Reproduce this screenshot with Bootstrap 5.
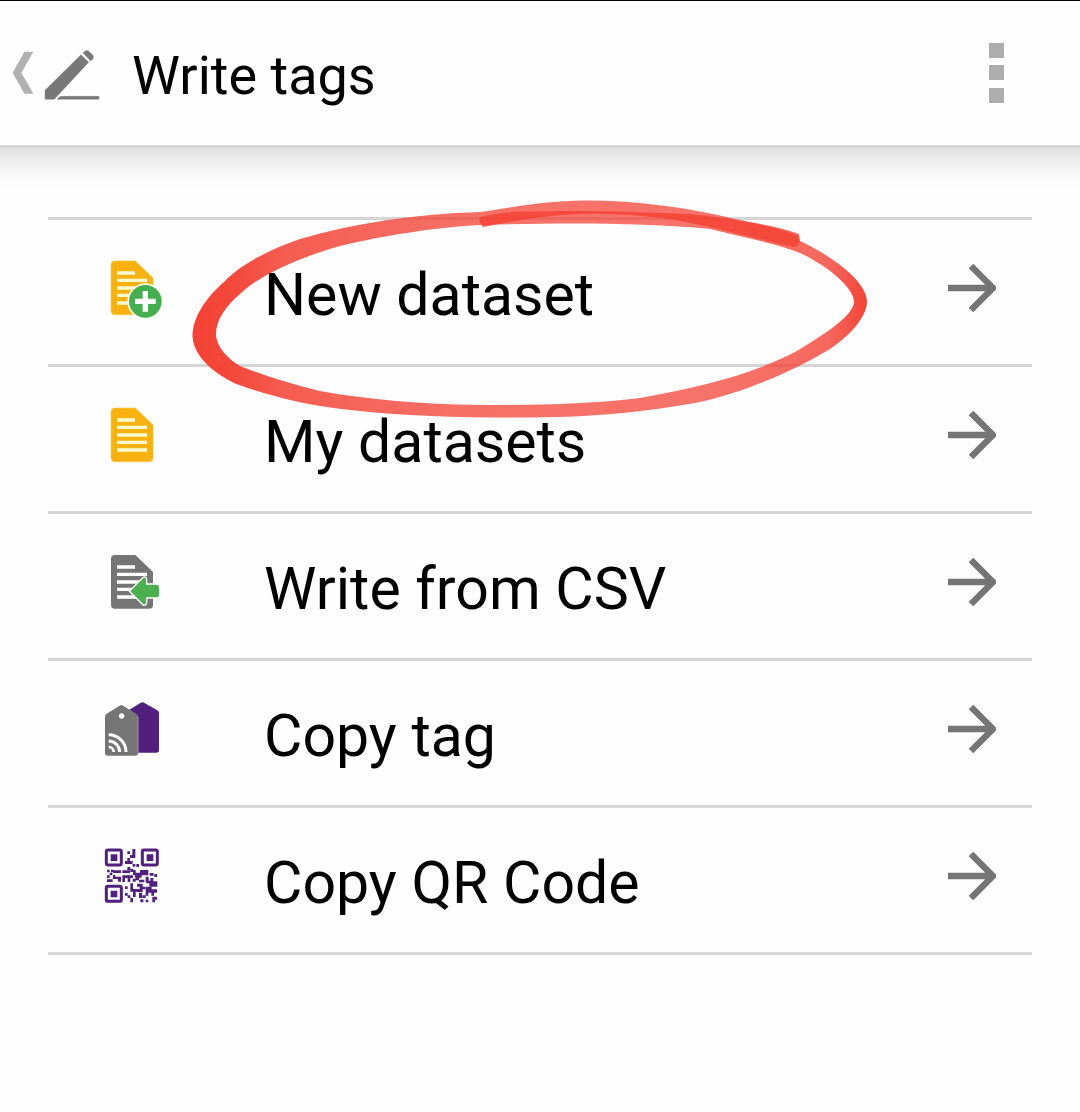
<!DOCTYPE html>
<html lang="en">
<head>
<meta charset="utf-8">
<meta name="viewport" content="width=device-width, initial-scale=1">
<title>Write tags</title>
<link href="https://cdn.jsdelivr.net/npm/bootstrap@5.3.0/dist/css/bootstrap.min.css" rel="stylesheet">
<style>
body { font-family: Roboto, "Noto Sans", sans-serif; background: #fefefe; color: #000; }
svg { display: block; flex: none; }
.app-bar { border-top: 1px solid #000; border-bottom: 3px solid #d5d5d5; height: 148px; padding-right: 76px; }
.app-title { font-size: 54px; line-height: 64px; font-weight: 400; margin-left: 22px; padding-top: 6px; }
.bar-shade { height: 69px; background: linear-gradient(#e0e0e0 0, #efefef 14px, #fafafa 28px, #fefefe 40px); }
.menu-list { margin: 0 48px; border-top: 3px solid #d5d5d5; }
.menu-list > li { border-bottom: 3px solid #d5d5d5; }
.menu-row { height: 144px; padding: 0 36px 4px 47px; color: #000; }
.menu-text { font-size: 59px; line-height: 70px; padding-top: 10px; margin-left: 89px; }
.pen-mark { left: 136px; top: -28px; pointer-events: none; z-index: 2; }
</style>
</head>
<body>
<svg width="0" height="0" class="position-absolute" aria-hidden="true">
  <defs>
    <path id="sheet" d="M60 33H121L174 84V183Q174 194 163 194H60Q48 194 48 183V44Q48 33 60 33Z"/>
    <path id="sheet-lines" d="M66 69H120M66 91H156M66 114H156M66 136H156M66 159H156" stroke-width="10" fill="none"/>
    <path id="arrow" d="M0 24H43M23 2L45 24L23 46" fill="none" stroke="#757575" stroke-width="6.500"/>
  </defs>
</svg>

<header class="app-bar d-flex align-items-center">
  <a href="#" aria-label="Back">
    <svg width="110" height="60" viewBox="0 130 330 180">
      <path d="M73 156H100L64 219L100 282H73L38 219Z" fill="#b1b1b1"/>
      <path d="M135 272L243 165L266 188L163 299H135ZM249 160L256 154Q262 150 268 156L278 166Q283 172 278 179L272 184ZM181 290H297V299H171Z" fill="#787878" stroke="#787878"/>
    </svg>
  </a>
  <h1 class="app-title mb-0">Write tags</h1>
  <button type="button" class="btn p-0 border-0 ms-auto" aria-label="More options">
    <svg width="15" height="60" viewBox="0 0 15 60" fill="#adadad"><path d="M0 0h15v15H0zM0 22h15v15H0zM0 45h15v15H0z"/></svg>
  </button>
</header>
<div class="bar-shade"></div>

<main>
  <ul class="menu-list list-unstyled">
    <li class="position-relative">
      <a href="#" class="menu-row d-flex align-items-center text-decoration-none">
        <svg width="80" height="80" viewBox="0 0 240 240">
          <use href="#sheet" fill="#f7b20f" stroke="#f9c54a" stroke-width="2"/>
          <use href="#sheet-lines" stroke="#fffad0"/>
          <circle cx="151" cy="154" r="54" fill="#fffff0"/>
          <circle cx="151" cy="154" r="49" fill="#45ae50"/>
          <path d="M151 123V185M120 154H182" stroke="#fff" stroke-width="16"/>
        </svg>
        <span class="menu-text">New dataset</span>
        <svg class="ms-auto" width="48" height="52" viewBox="0 0 48 52"><use href="#arrow"/></svg>
      </a>
      <svg class="pen-mark position-absolute" width="700" height="240" viewBox="184 192 700 240" aria-hidden="true">
        <defs>
          <linearGradient id="ink" gradientUnits="userSpaceOnUse" x1="192" y1="0" x2="868" y2="0">
            <stop offset="0" stop-color="#f44336"/>
            <stop offset=".06" stop-color="#f44336" stop-opacity=".97"/>
            <stop offset=".14" stop-color="#f44336" stop-opacity=".86"/>
            <stop offset=".4" stop-color="#f44336" stop-opacity=".76"/>
            <stop offset=".75" stop-color="#f44336" stop-opacity=".74"/>
            <stop offset=".94" stop-color="#f44336" stop-opacity=".8"/>
            <stop offset="1" stop-color="#f44336"/>
          </linearGradient>
        </defs>
        <path fill="url(#ink)" fill-rule="evenodd" d="M799 234C780 227 760 224 735 219C690 208 640 200.500 585 200.500C545 201 520 206 480 212C415 214 355 223 300 239C270 249 240 265 225 281C203 300 192.500 320 192.500 336C193 352 207 370 236 384C262 393 300 405 350 410C410 417 480 418 530 417.500C600 417 650 411 700 402C755 389 800 367 830 349C848 337 867 318 867 301C866 283 838 259 800 241ZM480 225C550 223 640 222 710 229C745 238 775 243 800 253C828 266 854 288 854 302C853 316 825 334 795 352C750 375 700 387 640 398C590 404 540 405 480 405C420 404 370 400 320 391C290 384 260 374 240 366C222 355 216 342 216 334C216 320 226 306 240 294C258 276 300 257 340 246C385 235 440 227 480 225Z"/>
        <path fill="#f44336" fill-opacity=".85" d="M480 217Q505 211 530 211.500C590 210 640 212 690 214C730 218 770 225 794 234Q801 237 799 243Q797 249 790 246C760 240 730 231 700 225C660 216 620 213 580 214C545 215 515 221 483 227Q478 222 480 217Z"/>
      </svg>
    </li>
    <li>
      <a href="#" class="menu-row d-flex align-items-center text-decoration-none">
        <svg width="80" height="80" viewBox="0 0 240 240">
          <use href="#sheet" fill="#f7b20f" stroke="#f9c54a" stroke-width="2"/>
          <use href="#sheet-lines" stroke="#fffad0"/>
        </svg>
        <span class="menu-text">My datasets</span>
        <svg class="ms-auto" width="48" height="52" viewBox="0 0 48 52"><use href="#arrow"/></svg>
      </a>
    </li>
    <li>
      <a href="#" class="menu-row d-flex align-items-center text-decoration-none">
        <svg width="80" height="80" viewBox="0 0 240 240">
          <use href="#sheet" fill="#757575"/>
          <use href="#sheet-lines" stroke="#fff"/>
          <path d="M106 142L145 102Q152 98 153 107V122H184Q192 122 192 130V152Q192 160 184 160H153V175Q152 185 145 181Z" fill="#4caf50" stroke="#fff" stroke-width="8" paint-order="stroke"/>
        </svg>
        <span class="menu-text">Write from CSV</span>
        <svg class="ms-auto" width="48" height="52" viewBox="0 0 48 52"><use href="#arrow"/></svg>
      </a>
    </li>
    <li>
      <a href="#" class="menu-row d-flex align-items-center text-decoration-none">
        <svg width="80" height="80" viewBox="0 3 240 240">
          <path d="M94 65L137 38Q142 35 147 38L187 61Q192 64 192 70V180Q192 188 184 188H94Z" fill="#50207c"/>
          <path d="M30 81Q30 74 35 71L74 47Q79 43 84 47L124 71Q129 74 129 81V189Q129 197 121 197H38Q30 197 30 189Z" fill="#757575"/>
          <path d="M129 80V188" stroke="#c9bdd3" stroke-width="2"/>
          <circle cx="80" cy="78" r="8" fill="#fff"/>
          <path d="M41 153A33 33 0 0 1 74 186M41 134A52 52 0 0 1 93 186" fill="none" stroke="#fff" stroke-width="9"/>
          <path d="M41 167A19 19 0 0 1 60 186H52A11 11 0 0 0 41 175Z" fill="#fff"/>
        </svg>
        <span class="menu-text">Copy tag</span>
        <svg class="ms-auto" width="48" height="52" viewBox="0 0 48 52"><use href="#arrow"/></svg>
      </a>
    </li>
    <li>
      <a href="#" class="menu-row d-flex align-items-center text-decoration-none">
        <svg width="80" height="80" viewBox="0 0 240 240" fill="#50207c">
          <g fill="none" stroke="#50207c" stroke-width="9">
            <rect x="34" y="36" width="45" height="45" rx="5"/>
            <rect x="142" y="36" width="45" height="45" rx="5"/>
            <rect x="34" y="145" width="45" height="45" rx="5"/>
          </g>
          <path d="M47 49h20v20H47zM155 49h20v20h-20zM47 158h20v20H47z"/>
          <path d="M112 33h9v27h-16v-9h7zM97 40h8v8h-8zM97 60h8v9h8v9H90v-9h7zM113 78h8v8h-8zM124 78h8v9h-8zM97 87h9v9h-9zM106 93h8v9h-8z"/>
          <path d="M36 95h8v8h-8zM48 95h8v8h-8zM55 97h23v8H55zM82 97h23v8H82zM44 104h8v8h-8zM36 112h8v8h-8zM36 124h17v8H36zM54 111h7v12h-7zM61 116h17v15h-9v-8h-8zM82 112h8v20h-8zM90 112h24v8h-8v12h-8v-12h-8zM114 96h8v16h-8zM120 104h15v-8h25v16h-20v7h-20zM164 105h12v8h-12zM113 122h9v9h-9zM122 119h10v8h-10zM132 125h16v8h-16zM152 116h9v18h-9zM166 120h9v10h12v16h-24v-10h-7v-8h10zM178 108h8v9h-8z"/>
          <path d="M106 136h8v17h18v8h-10v16h-8v-16h-8zM90 145h8v8h-8zM90 165h8v8h-8zM98 172h8v8h-8zM106 180h8v13h-8zM126 137h17v9h8v8h-8v8h-17v-8h8v-8h-8zM152 146h18v8h16v10h-9v9h-8v-9h-9v9h-8zM132 164h9v16h-9zM136 184h9v9h-9zM142 172h10v8h-10zM152 185h8v8h-8zM172 176h14v9h-6v8h-8z"/>
        </svg>
        <span class="menu-text">Copy QR Code</span>
        <svg class="ms-auto" width="48" height="52" viewBox="0 0 48 52"><use href="#arrow"/></svg>
      </a>
    </li>
  </ul>
</main>
<script src="https://cdn.jsdelivr.net/npm/bootstrap@5.3.0/dist/js/bootstrap.bundle.min.js"></script>
</body>
</html>
